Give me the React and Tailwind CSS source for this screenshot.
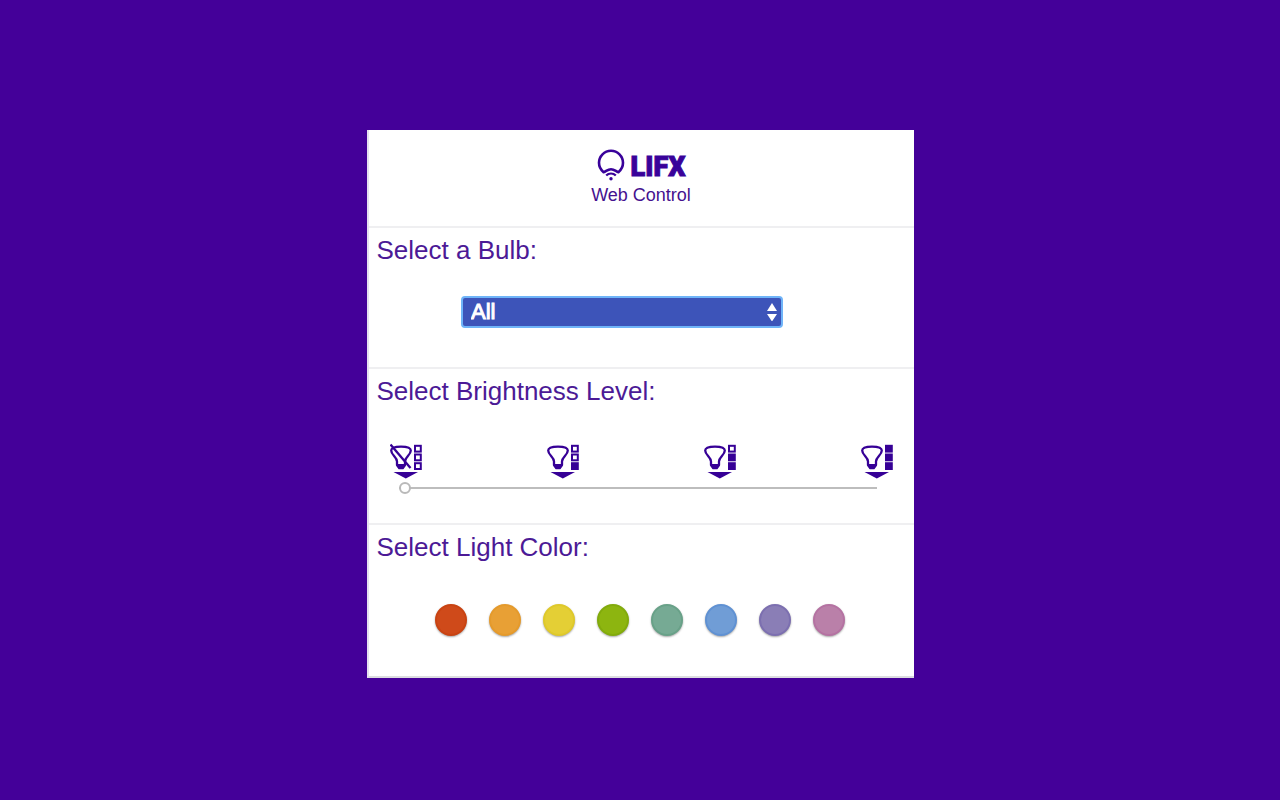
import React, { useState } from "react";

const COLORS = [
  { name: "Red", cls: "bg-[#cf4a1a] border-[#c94312]" },
  { name: "Orange", cls: "bg-[#e8a035] border-[#e59a2b]" },
  { name: "Yellow", cls: "bg-[#e4cf35] border-[#dfc92a]" },
  { name: "Green", cls: "bg-[#8db510] border-[#82ab0c]" },
  { name: "Teal", cls: "bg-[#76aa94] border-[#68a188]" },
  { name: "Blue", cls: "bg-[#709dd6] border-[#5f91d3]" },
  { name: "Purple", cls: "bg-[#8a7eb6] border-[#7c6fb0]" },
  { name: "Pink", cls: "bg-[#ba80a9] border-[#b572a2]" },
];

function LogoMark() {
  return (
    <svg viewBox="0 0 28 32" className="h-8 w-7" fill="none" stroke="#39029a" strokeWidth="2.6" strokeLinejoin="round" aria-hidden="true">
      <path d="M6.600 23.200C3.900 21 2 17.600 2 13.800a12 12 0 0 1 24 0c0 3.800-1.900 7.200-4.600 9.400C19 22.600 17.500 20.200 14 20.200S9 22.600 6.600 23.200Z" />
      <path d="M9.200 26.600C10.500 25.200 12.200 24.500 14 24.500s3.500 .7 4.800 2.100" strokeWidth="2.200" />
      <circle cx="14" cy="29.800" r="1.700" fill="#39029a" stroke="none" />
    </svg>
  );
}

function LevelIcon({ level }) {
  return (
    <svg viewBox="0 0 32 36" className="h-9 w-8" fill="none" stroke="#360096" strokeWidth="2.3" strokeLinejoin="round" aria-hidden="true">
      <path d="M1.200 7.600C1.200 4.400 5.200 3.600 11 3.600S20.800 4.400 20.800 7.600c0 4.600-5.800 6.400-5.800 11v3.400l-2.200 3.200H9.200L7 22v-3.400C7 14 1.200 12.200 1.200 7.600Z" />
      <path d="M7.300 21h7.400l-1.700 5h-4Z" fill="#360096" stroke="none" />
      {level === 0 && <path d="M0.500 1.500l20 23.500" />}
      <path d="M3.500 29h24.500l-12.200 6.500Z" fill="#360096" stroke="none" />
      {[0, 1, 2].map((i) => (
        <rect key={i} x="25" y={20.2 - i * 8.7} width="5.800" height="5.800" strokeWidth="2" strokeLinejoin="miter" fill={i < level ? "#360096" : "none"} />
      ))}
    </svg>
  );
}

function Section({ title, htmlFor, className, children }) {
  return (
    <section className={"border-t-2 border-[#efeff1] " + className}>
      <h2 className="px-2 pt-[7px] text-[26px] leading-[30px] text-[#4c1a96]">
        {htmlFor ? <label htmlFor={htmlFor}>{title}</label> : title}
      </h2>
      {children}
    </section>
  );
}

export default function App() {
  const [level, setLevel] = useState(0);
  return (
    <div className="flex min-h-screen items-center justify-center bg-[#440099] pt-2 font-['Liberation_Sans',Arial,sans-serif]">
      <main className="w-full max-w-[547px] border-b-2 border-l-2 border-b-[#dcdce0] border-l-[#e6e0f0] bg-white">
        <header className="flex flex-col items-center pt-[19px] pb-[18px] text-[#39029a]">
          <div className="flex items-center gap-[6px]">
            <LogoMark />
            <span className="pt-1 font-['Roboto',sans-serif] text-[27px] leading-7 font-black [-webkit-text-stroke:1px_#39029a]">LIFX</span>
          </div>
          <h1 className="pt-[2px] text-[18px] leading-[25px] text-[#45128f]">Web Control</h1>
        </header>

        <Section title="Select a Bulb:" htmlFor="bulb" className="pb-[39px]">
          <div className="mt-[31px] flex justify-center pr-[38px]">
            <div className="relative w-[322px]">
              <select
                id="bulb"
                className="block h-8 w-full appearance-none rounded-sm border-2 border-[#6fb4f8] bg-[#3d54b9] px-2 text-[22px] leading-7 text-white outline-none [-webkit-text-stroke:1px_white]"
              >
                <option>All</option>
              </select>
              <svg viewBox="0 0 10 18" className="pointer-events-none absolute top-[7px] right-[6px] h-[18px] w-[10px]" fill="white" aria-hidden="true">
                <path d="M5 0l5 8H0ZM5 18.500l5-7.500H0Z" />
              </svg>
            </div>
          </div>
        </Section>

        <Section title="Select Brightness Level:" htmlFor="level" className="pb-[29px]">
          <div className="mt-[37px] flex justify-between pr-5 pl-[21px]">
            {[0, 1, 2, 3].map((i) => (
              <LevelIcon key={i} level={i} />
            ))}
          </div>
          <div className="mt-[3px] pr-[37px] pl-[30px]">
            <input
              id="level"
              type="range"
              min="0"
              max="3"
              value={level}
              onChange={(e) => setLevel(Number(e.target.value))}
              className="block h-3 w-full appearance-none bg-transparent outline-none [&::-webkit-slider-runnable-track]:h-[2px] [&::-webkit-slider-runnable-track]:bg-[#bdbdbd] [&::-webkit-slider-thumb]:-mt-[5px] [&::-webkit-slider-thumb]:size-3 [&::-webkit-slider-thumb]:appearance-none [&::-webkit-slider-thumb]:rounded-full [&::-webkit-slider-thumb]:border-2 [&::-webkit-slider-thumb]:border-[#b9b9b9] [&::-webkit-slider-thumb]:bg-white"
            />
          </div>
        </Section>

        <Section title="Select Light Color:" className="pb-10">
          <div className="mt-[42px] flex justify-center gap-[22px] pr-[3px]">
            {COLORS.map((c) => (
              <button
                key={c.name}
                type="button"
                aria-label={c.name}
                className={"size-8 rounded-full border-2 shadow-[0_1px_2px_rgba(0,0,0,0.35)] " + c.cls}
              />
            ))}
          </div>
        </Section>
      </main>
    </div>
  );
}
